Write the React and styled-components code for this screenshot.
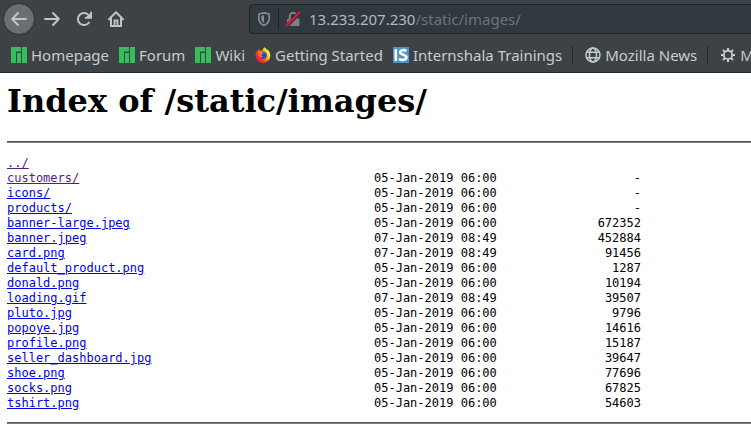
import React from "react";
import styled, { createGlobalStyle } from "styled-components";

const GlobalStyle = createGlobalStyle`
  *, *::before, *::after { box-sizing: border-box; }
  body { margin: 0; background: #ffffff; overflow-x: hidden; }
`;

const Chrome = styled.header`
  background: #3e4245;
  border-bottom: 1px solid #1f292d;
  font-family: "Noto Sans", sans-serif;
  color: #c5cecd;
  overflow: hidden;
`;

const NavBar = styled.nav`
  display: flex;
  align-items: center;
  height: 38px;
  padding-left: 3px;
`;

const NavGroup = styled.div`
  display: flex;
  flex: none;
  width: 246px;
`;

const NavButton = styled.button`
  display: grid;
  place-items: center;
  flex: none;
  width: 32px;
  height: 32px;
  margin-right: ${(p) => (p.$raised ? "1px" : "0")};
  padding: 0;
  border: ${(p) => (p.$raised ? "1px solid #2b2f31" : "0")};
  border-radius: 50%;
  background: ${(p) => (p.$raised ? "#6b6f71" : "transparent")};
  color: #bcc6c4;
  svg { display: block; }
`;

const AddressBar = styled.form`
  display: flex;
  align-items: center;
  flex: 1;
  min-width: 0;
  height: 30px;
  padding-left: 7px;
  border: 1px solid #1d2629;
  border-right: 0;
  border-radius: 4px 0 0 4px;
  background: #2f393e;
  font-size: 15px;
  line-height: 22px;
`;

const Shield = styled.span`
  display: flex;
  align-items: center;
  height: 22px;
  padding-right: 7px;
  margin-right: 6px;
  border-right: 1px solid #1d2629;
`;

const Security = styled.span`
  display: flex;
  align-items: center;
  height: 22px;
  margin-right: 8px;
`;

const Host = styled.label`
  color: #b4bbba;
`;

const PathInput = styled.input`
  flex: 1;
  min-width: 0;
  height: 22px;
  padding: 0;
  border: 0;
  outline: 0;
  background: transparent;
  color: #6e7577;
  font: inherit;
`;

const Bookmarks = styled.nav`
  display: flex;
  align-items: center;
  height: 34px;
  padding-left: 11px;
  white-space: nowrap;
`;

const Bookmark = styled.a`
  display: flex;
  align-items: center;
  flex: none;
  gap: 4px;
  margin-right: 10px;
  color: inherit;
  font-size: 15px;
  line-height: 20px;
  text-decoration: none;
  svg { display: block; flex: none; }
`;

const Divider = styled.span`
  flex: none;
  width: 1px;
  height: 18px;
  margin-right: 12px;
  background: #24292b;
`;

const Page = styled.main`
  padding: 10px 0 0 7px;
`;

const Title = styled.h1`
  margin: 0 0 21px;
  color: #000000;
  font: bold 32px/37px "DejaVu Serif", serif;
`;

const Rule = styled.hr`
  height: 2px;
  margin: 0;
  border: 0;
  border-top: 1px solid #555555;
  background: #808080;
`;

const Listing = styled.table`
  width: 634px;
  margin: 13px 0 11px;
  border-collapse: collapse;
  table-layout: fixed;
  color: #000000;
  font: 12px/15px "DejaVu Sans Mono", monospace;
  td { height: 15px; padding: 0; white-space: pre; }
`;

const NameColumn = styled.col`
  width: 367px;
`;

const DateColumn = styled.col`
  width: 123px;
`;

const SizeCell = styled.td`
  text-align: right;
`;

const FileLink = styled.a`
  color: ${(p) => (p.$visited ? "#551a8b" : "#0000ee")};
  text-decoration: underline;
`;

const Stroke = ({ size = 18, width = 2, children }) => (
  <svg width={size} height={size} viewBox={`0 0 ${size} ${size}`} fill="none" stroke="currentColor" strokeWidth={width} strokeLinecap="round" strokeLinejoin="round" aria-hidden="true">
    {children}
  </svg>
);

const BackIcon = () => <Stroke><path d="M16 9H2.5M8 3 2.200 9 8 15" /></Stroke>;
const ForwardIcon = () => <Stroke><path d="M2 9h13.5M10 3l5.800 6-5.800 6" /></Stroke>;
const ReloadIcon = () => (
  <Stroke>
    <path d="M14 12.500A6.100 6.100 0 1 1 14 5.500" />
    <path d="M16 2.500v5.200h-5.200" strokeLinejoin="miter" />
    <path d="M15.500 4v3.200h-3.200z" fill="currentColor" strokeWidth="1" />
  </Stroke>
);
const HomeIcon = () => (
  <Stroke>
    <path d="M2 9.200 9 2.200l7 7" />
    <path d="M4 8.500V16h10V8.500" />
    <path d="M7.500 15.500v-5h3v5" strokeWidth="1.800" strokeLinejoin="miter" />
    <path d="M9 13v.2" strokeWidth="1" />
  </Stroke>
);

const ShieldIcon = () => (
  <svg width="14" height="16" viewBox="0 0 14 16" fill="none" aria-hidden="true">
    <path d="M7 1.8 12.2 3v4.5c0 3.100-2 5.500-5.200 7-3.200-1.500-5.200-3.900-5.200-7V3z" stroke="#858b8c" strokeWidth="1.700" strokeLinejoin="round" />
    <path d="M7 4.200v7.700c-1.800-1.100-2.700-2.500-2.700-4.200V4.800z" fill="#858b8c" />
  </svg>
);

const BrokenLockIcon = () => (
  <svg width="16" height="16" viewBox="0 0 16 16" fill="none" aria-hidden="true">
    <path d="M4.800 8V5a3.300 3.300 0 0 1 6.600 0V8" stroke="#7d8283" strokeWidth="2" />
    <rect x="2" y="7.500" width="12.500" height="7.500" rx="1.500" fill="#7d8283" />
    <path d="M1.500 15.200 15 1.400" stroke="#2f393e" strokeWidth="3.800" />
    <path d="M1.500 14.500 14.500 1.400" stroke="#f0103f" strokeWidth="2" strokeLinecap="round" />
  </svg>
);

const ManjaroIcon = () => (
  <svg width="16" height="16" viewBox="0 0 16 16" aria-hidden="true">
    <path fill="#35bf5c" d="M0 0h10v4.500H5V16H0zM6 6h4v10H6zM11 0h5v16h-5z" />
  </svg>
);

const FirefoxIcon = () => (
  <svg width="16" height="16" viewBox="0 0 16 16" aria-hidden="true">
    <defs>
      <linearGradient id="flame" x1="0.9" y1="0.2" x2="0.1" y2="0.75">
        <stop offset="0.1" stopColor="#fff036" />
        <stop offset="0.4" stopColor="#ffa016" />
        <stop offset="0.7" stopColor="#ff3b26" />
        <stop offset="1" stopColor="#f0154f" />
      </linearGradient>
    </defs>
    <path fill="url(#flame)" d="M9.500.2c1 1 1.500 1.700 2.300 2.500l.8-.2c1.900 1.700 2.800 4 2.700 6.400A7.300 7.300 0 0 1 8 15.800C3.900 15.800.5 12.600.5 8.500c0-2 .5-3.500 1.300-4.700l.4 1c.3-1.200.9-2 1.800-2.700l.2 1.700c1.500-.5 2.500-.2 3.300.3C7.400 2.500 8.200 1.200 9.500.2z" />
    <circle cx="8" cy="8.300" r="3.800" fill="#3a3fc4" />
    <path fill="#298fff" d="M7 4.500c2.600-.7 4.900.8 4.900 3.600-.8-1.700-2.300-2.400-4.200-2.200z" />
    <path fill="#ff7a16" d="M3.300 5.200c1.500-.8 3-.7 4.300.3l.8.900-2 1c-.3 1.300.4 2 1.800 1.800-1.100 1.700-3.800 1.600-4.700-.4z" />
  </svg>
);

const BadgeIcon = () => (
  <svg width="16" height="16" viewBox="0 0 16 16" aria-hidden="true">
    <rect width="16" height="16" fill="#4b93c9" />
    <g fill="none" stroke="#ffffff" strokeWidth="2.600">
      <path d="M2.800 2v12" />
      <path d="M13.400 4C11.500 2.700 7.200 2.700 7.200 5.300c0 2.900 6.200 2.200 6.200 5 0 2.900-4.600 3.200-7.400 1.500" />
    </g>
  </svg>
);

const GlobeIcon = () => (
  <Stroke size={16} width={1.5}>
    <circle cx="8" cy="8" r="7" />
    <ellipse cx="8" cy="8" rx="3.500" ry="7" />
    <path d="M1.800 5.300h12.400M1.800 10.700h12.400" />
  </Stroke>
);

const GearIcon = () => (
  <svg width="16" height="16" viewBox="0 0 16 16" fill="none" stroke="currentColor" aria-hidden="true">
    <circle cx="8" cy="8" r="4.200" strokeWidth="1.800" />
    <path strokeWidth="2" d="M8 1v2.500M8 12.500V15M1 8h2.500M12.500 8H15M3 3l1.900 1.900M11.100 11.100 13 13M3 13l1.900-1.900M11.100 4.900 13 3" />
  </svg>
);

const bookmarks = [
  { label: "Homepage", Icon: ManjaroIcon },
  { label: "Forum", Icon: ManjaroIcon },
  { label: "Wiki", Icon: ManjaroIcon },
  { label: "Getting Started", Icon: FirefoxIcon },
  { label: "Internshala Trainings", Icon: BadgeIcon, divided: true },
  { label: "Mozilla News", Icon: GlobeIcon, divided: true },
  { label: "M", Icon: GearIcon },
];

const files = [
  ["../", "", "", true],
  ["customers/", "05-Jan-2019 06:00", "-", true],
  ["icons/", "05-Jan-2019 06:00", "-"],
  ["products/", "05-Jan-2019 06:00", "-"],
  ["banner-large.jpeg", "05-Jan-2019 06:00", "672352"],
  ["banner.jpeg", "07-Jan-2019 08:49", "452884"],
  ["card.png", "07-Jan-2019 08:49", "91456"],
  ["default_product.png", "05-Jan-2019 06:00", "1287"],
  ["donald.png", "05-Jan-2019 06:00", "10194"],
  ["loading.gif", "07-Jan-2019 08:49", "39507"],
  ["pluto.jpg", "05-Jan-2019 06:00", "9796"],
  ["popoye.jpg", "05-Jan-2019 06:00", "14616"],
  ["profile.png", "05-Jan-2019 06:00", "15187"],
  ["seller_dashboard.jpg", "05-Jan-2019 06:00", "39647"],
  ["shoe.png", "05-Jan-2019 06:00", "77696"],
  ["socks.png", "05-Jan-2019 06:00", "67825"],
  ["tshirt.png", "05-Jan-2019 06:00", "54603"],
];

export default function App() {
  return (
    <>
      <GlobalStyle />
      <Chrome>
        <NavBar aria-label="Navigation">
          <NavGroup>
            <NavButton type="button" aria-label="Back" $raised><BackIcon /></NavButton>
            <NavButton type="button" aria-label="Forward"><ForwardIcon /></NavButton>
            <NavButton type="button" aria-label="Reload"><ReloadIcon /></NavButton>
            <NavButton type="button" aria-label="Home"><HomeIcon /></NavButton>
          </NavGroup>
          <AddressBar onSubmit={(e) => e.preventDefault()}>
            <Shield><ShieldIcon /></Shield>
            <Security><BrokenLockIcon /></Security>
            <Host htmlFor="path">13.233.207.230</Host>
            <PathInput id="path" type="text" defaultValue="/static/images/" />
          </AddressBar>
        </NavBar>
        <Bookmarks aria-label="Bookmarks">
          {bookmarks.map(({ label, Icon, divided }) => (
            <React.Fragment key={label}>
              <Bookmark href="#"><Icon />{label}</Bookmark>
              {divided && <Divider />}
            </React.Fragment>
          ))}
        </Bookmarks>
      </Chrome>
      <Page>
        <Title>Index of /static/images/</Title>
        <Rule />
        <Listing>
          <colgroup><NameColumn /><DateColumn /><col /></colgroup>
          <tbody>
            {files.map(([name, date, size, visited]) => (
              <tr key={name}>
                <td><FileLink href={"#" + name} $visited={visited}>{name}</FileLink></td>
                <td>{date}</td>
                <SizeCell>{size}</SizeCell>
              </tr>
            ))}
          </tbody>
        </Listing>
        <Rule />
      </Page>
    </>
  );
}
